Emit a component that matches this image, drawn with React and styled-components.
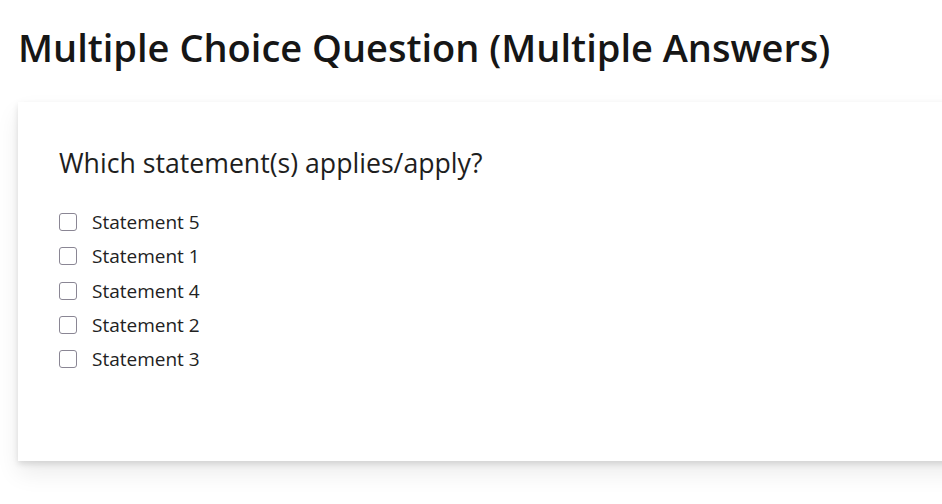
import React from "react";
import styled, { createGlobalStyle } from "styled-components";

const Global = createGlobalStyle`
  html { overflow: hidden; }
  html, body { margin: 0; padding: 0; background: #fff; }
  body { font-family: "Open Sans", "Noto Sans", sans-serif; color: #1a1a1a; }
`;

const Page = styled.div`
  padding: 22px 0 60px 18px;
  width: 1000px;
`;

const Title = styled.h1`
  margin: 0;
  font-size: 38px;
  font-weight: 600;
  line-height: 50px;
  color: #161616;
`;

const Card = styled.section`
  margin-top: 30px;
  background: #fff;
  box-shadow: 0 12px 22px rgba(0, 0, 0, 0.08), 0 3px 6px rgba(0, 0, 0, 0.12);
  padding: 42px 41px 80px;
  height: 359px;
  box-sizing: border-box;
`;

const Question = styled.p`
  margin: 0 0 23px;
  font-size: 26.67px;
  line-height: 38px;
  color: #1e1e1e;
`;

const Options = styled.ul`
  list-style: none;
  margin: 0;
  padding: 0;
  display: flex;
  flex-direction: column;
`;

const Option = styled.label`
  display: flex;
  align-items: center;
  gap: 15px;
  height: 34.3px;
  font-size: 19px;
  color: #222;
`;

const Box = styled.span`
  width: 18px;
  height: 18px;
  box-sizing: border-box;
  border: 1px solid #8a8694;
  border-radius: 3px;
  background: #fff;
`;

const items = ["Statement 5", "Statement 1", "Statement 4", "Statement 2", "Statement 3"];

export default function App() {
  return (
    <>
      <Global />
      <Page>
        <Title>Multiple Choice Question (Multiple Answers)</Title>
        <Card>
          <Question>Which statement(s) applies/apply?</Question>
          <Options>
            {items.map((t) => (
              <li key={t}>
                <Option>
                  <Box />
                  {t}
                </Option>
              </li>
            ))}
          </Options>
        </Card>
      </Page>
    </>
  );
}
